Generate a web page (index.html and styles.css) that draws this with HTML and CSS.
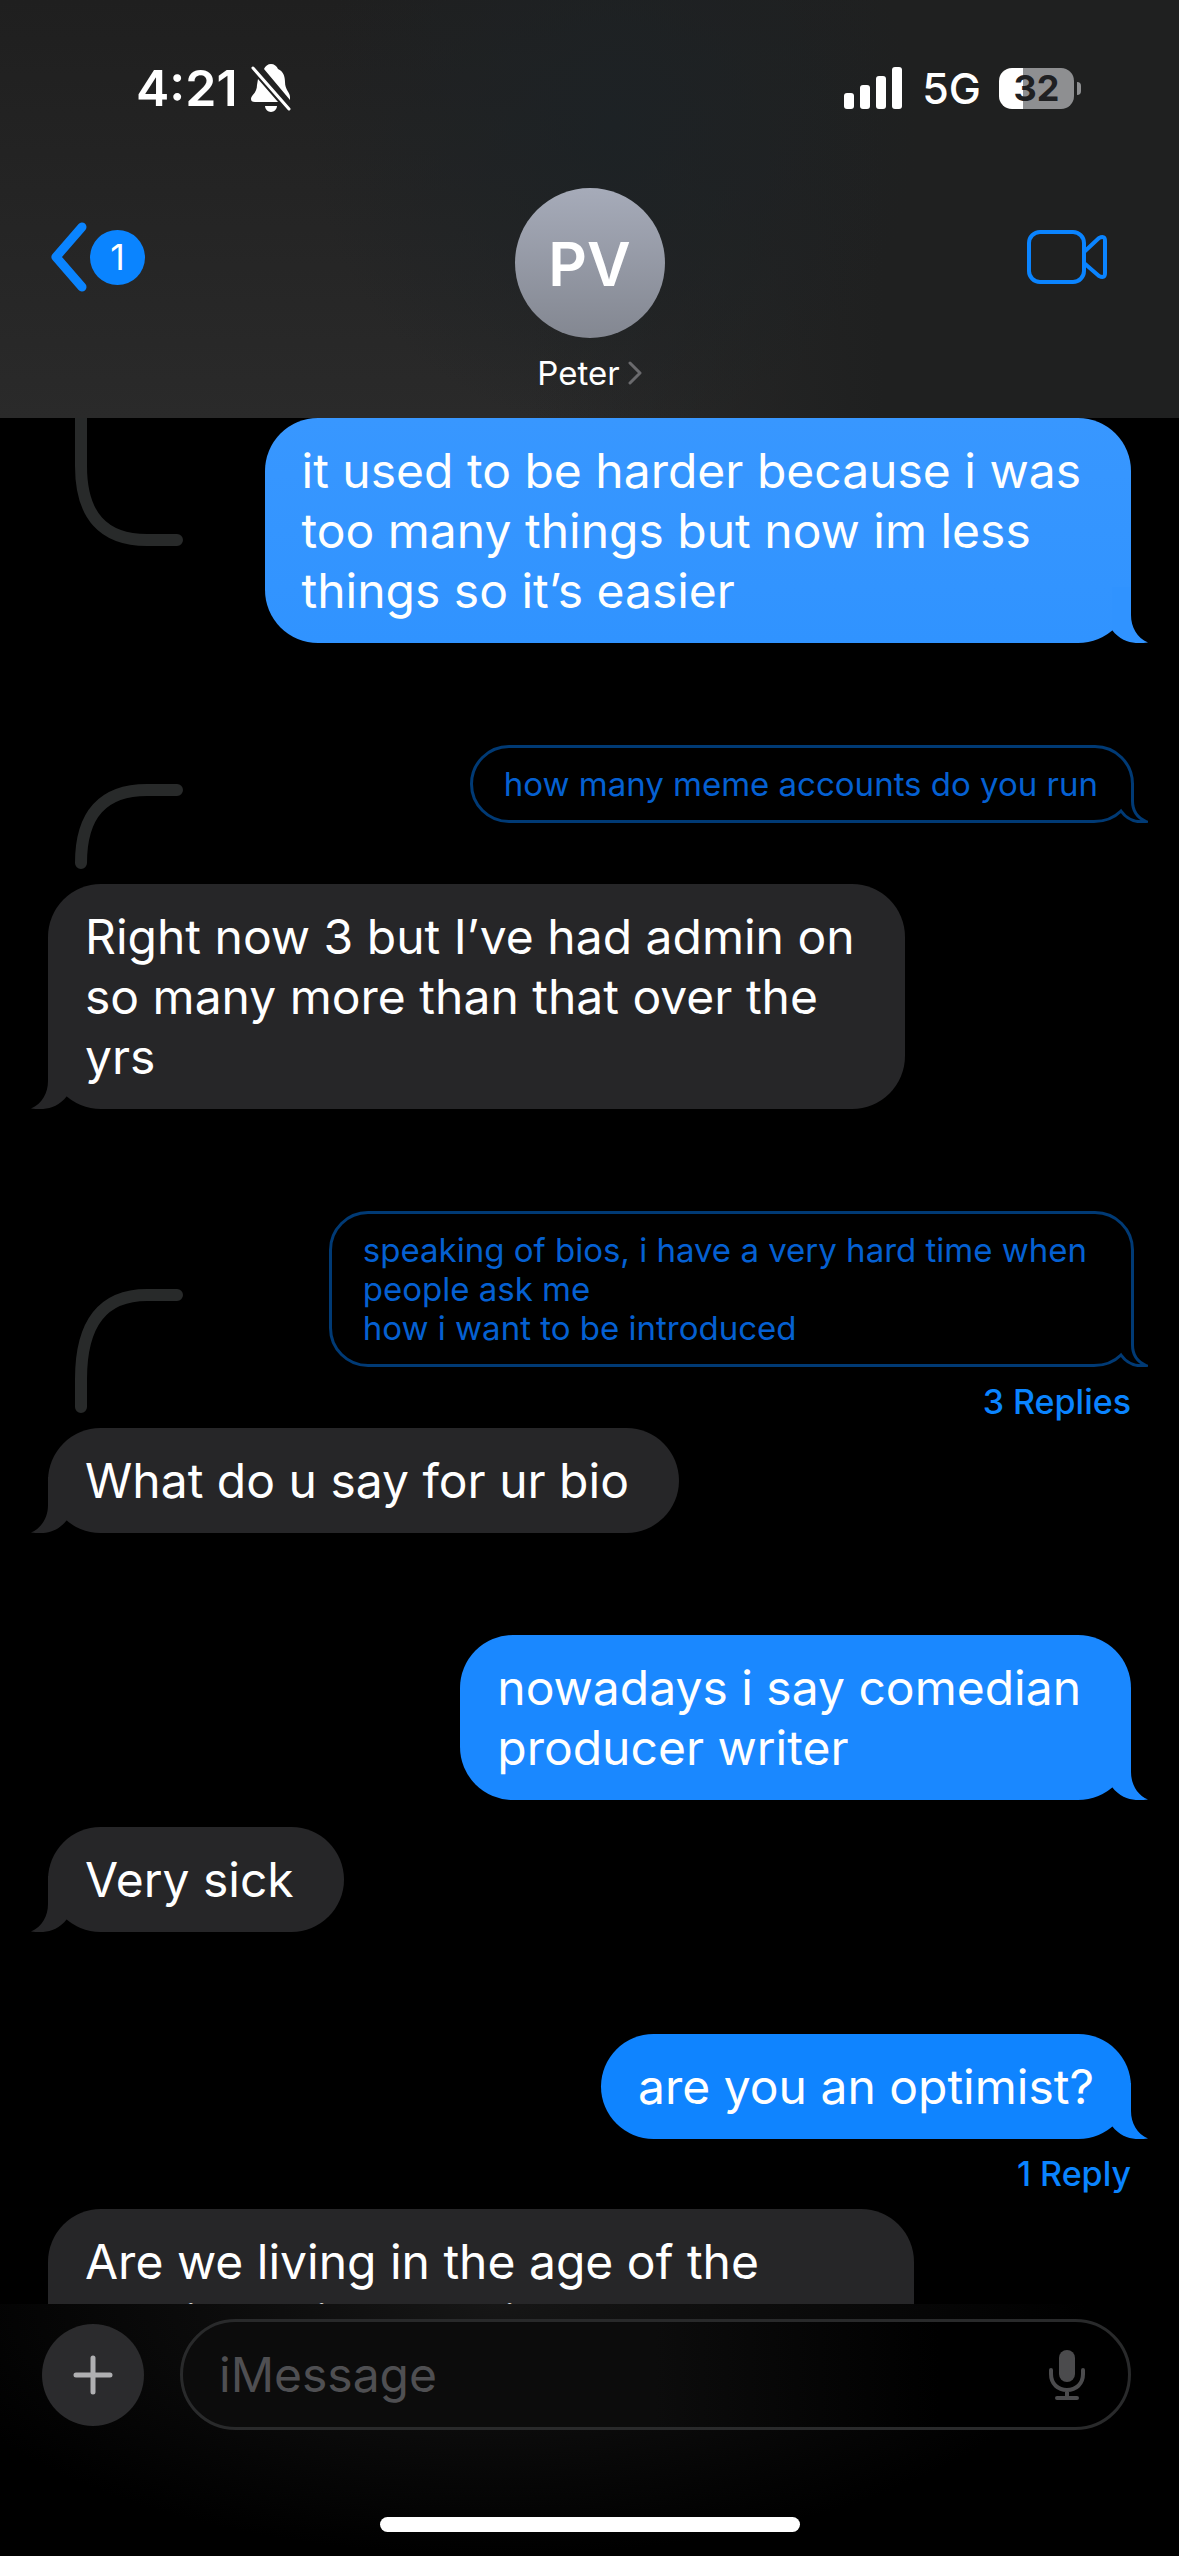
FILE: index.html
```html
<!DOCTYPE html>
<html lang="en">
<head>
    <meta charset="UTF-8">
    <meta name="viewport" content="width=device-width, initial-scale=1.0">
    <title>Peter</title>
    <link rel="stylesheet" href="styles.css">
</head>
<body>
    <!-- Tail shapes shared by the bubbles -->
    <svg class="defs" width="0" height="0" aria-hidden="true">
        <symbol id="tail" viewBox="0 0 40 56">
            <path d="M1 0H20V28C20 40 26 51 37 55.500C26 57 12 57 1 43Z"/>
        </symbol>
        <symbol id="quote-tail" viewBox="0 0 54 40">
            <path fill="#000" stroke="none" d="M41 0V41H0V36A36 36 0 0 0 36 0Z"/>
            <path d="M38.500 0V18C38.500 28 44 35 52 38.500C44 39.500 34 38 27 28C20 35 12 38.500 0 38.500"/>
        </symbol>
    </svg>

    <header class="header">
        <div class="status-bar">
            <div class="status-left">
                <span class="time">4:21</span>
                <svg class="bell" viewBox="0 0 40 48" aria-label="Silent mode">
                    <path fill="#fff" d="M13 5C14 2 17 0 20 0s6 2 7 5c5 2 7 7 7 13 0 8 5 10 5 15v3z"/>
                    <path fill="#fff" d="M7 15L27 38H4c-3 0-4-1-4-3 0-4 6-6 6-14zM14 42h12c0 3-3 6-6 6s-6-3-6-6z"/>
                    <path stroke="#fff" stroke-width="3" stroke-linecap="round" d="M2 4l36 41"/>
                </svg>
            </div>
            <div class="status-right">
                <svg class="signal" viewBox="0 0 58 42" fill="#fff" aria-label="Signal">
                    <rect x="0" y="26" width="10" height="16" rx="3"/>
                    <rect x="16" y="18" width="10" height="24" rx="3"/>
                    <rect x="32" y="9" width="10" height="33" rx="3"/>
                    <rect x="48" y="0" width="10" height="42" rx="3"/>
                </svg>
                <span class="network">5G</span>
                <span class="battery"><span class="battery-level">32</span></span>
            </div>
        </div>
        <div class="nav">
            <button class="back" type="button" aria-label="Back">
                <svg viewBox="0 0 38 70" fill="none" stroke="#0a84ff" stroke-width="9" stroke-linecap="round" stroke-linejoin="round">
                    <path d="M32 5L6 35l26 30"/>
                </svg>
                <span class="unread">1</span>
            </button>
            <button class="contact" type="button">
                <span class="avatar">PV</span>
                <span class="name">Peter
                    <svg viewBox="0 0 14 24" fill="none" stroke="#6a6a6d" stroke-width="3" stroke-linecap="round" stroke-linejoin="round">
                        <path d="M2 2l10 10L2 22"/>
                    </svg>
                </span>
            </button>
            <button class="video" type="button" aria-label="FaceTime">
                <svg viewBox="0 0 80 54" fill="none" stroke="#0a84ff" stroke-width="4" stroke-linejoin="round">
                    <rect x="2" y="2" width="55" height="50" rx="11"/>
                    <path d="M57 22L72 8q6-3 6 3v32q0 6-6 3L57 33"/>
                </svg>
            </button>
        </div>
    </header>

    <main class="messages">
        <div class="row first">
            <svg class="thread" viewBox="0 0 108 128">
                <path d="M6 -10V48Q6 122 72 122H102"/>
            </svg>
            <div class="bubble sent light">it used to be harder because i was<br>too many things but now im less<br>things so it’s easier<svg class="tail"><use href="#tail"/></svg></div>
        </div>

        <div class="row reply">
            <svg class="thread" viewBox="0 0 108 85">
                <path d="M6 79Q6 6 72 6H102"/>
            </svg>
            <div class="quote">how many meme accounts do you run<svg class="quote-tail"><use href="#quote-tail"/></svg></div>
        </div>
        <div class="bubble received">Right now 3 but I’ve had admin on<br>so many more than that over the<br>yrs<svg class="tail"><use href="#tail"/></svg></div>

        <div class="row reply">
            <svg class="thread" viewBox="0 0 108 124">
                <path d="M6 118V90Q6 6 72 6H102"/>
            </svg>
            <div class="quote-group">
                <div class="quote wide">speaking of bios, i have a very hard time when<br>people ask me<br>how i want to be introduced<svg class="quote-tail"><use href="#quote-tail"/></svg></div>
                <a class="replies" href="#">3 Replies</a>
            </div>
        </div>
        <div class="bubble received">What do u say for ur bio<svg class="tail"><use href="#tail"/></svg></div>

        <div class="bubble sent mid spaced">nowadays i say comedian<br>producer writer<svg class="tail"><use href="#tail"/></svg></div>
        <div class="bubble received close">Very sick<svg class="tail"><use href="#tail"/></svg></div>

        <div class="bubble sent snug spaced">are you an optimist?<svg class="tail"><use href="#tail"/></svg></div>
        <a class="replies" href="#">1 Reply</a>
        <div class="bubble received last">Are we living in the age of the<br>archives king was in</div>
    </main>

    <footer class="composer">
        <form class="composer-form">
            <button class="plus" type="button" aria-label="Add">
                <svg viewBox="0 0 40 40" stroke="#b0b0b2" stroke-width="5" stroke-linecap="round">
                    <path d="M20 3v34M3 20h34"/>
                </svg>
            </button>
            <div class="field">
                <input type="text" id="message" placeholder="iMessage" aria-label="iMessage">
                <button class="mic" type="button" aria-label="Dictate">
                    <svg viewBox="0 0 36 50" fill="none" stroke="#4b4b4d" stroke-width="4" stroke-linecap="round">
                        <rect x="10" y="0" width="16" height="32" rx="8" fill="#4b4b4d" stroke="none"/>
                        <path d="M2 20v4c0 10 7 16 16 16s16-6 16-16v-4M18 40v7M8 48h20"/>
                    </svg>
                </button>
            </div>
        </form>
        <div class="home-bar"></div>
    </footer>
</body>
</html>
```
FILE: styles.css
```css
* {
    box-sizing: border-box;
}
body {
    margin: 0;
    height: 100vh;
    display: flex;
    flex-direction: column;
    overflow: hidden;
    background-color: #000000;
    color: #ffffff;
    font-family: Inter, "Liberation Sans", sans-serif;
}
button {
    background: none;
    border: none;
    padding: 0;
    color: inherit;
    font-family: inherit;
    cursor: pointer;
}
svg {
    display: block;
    flex-shrink: 0;
}
.defs {
    position: absolute;
}

/* Header */
.header {
    flex-shrink: 0;
    padding: 56px 48px 24px;
    background:
        radial-gradient(circle at 52% 30%, #1d2225, transparent 45%),
        linear-gradient(90deg, transparent 45%, #1f2020 75%),
        linear-gradient(#1f1f1f, #2a2a2a);
}
.status-bar {
    display: flex;
    justify-content: space-between;
    align-items: center;
    height: 64px;
    padding: 0 55px 0 88px;
}
.status-left, .status-right {
    display: flex;
    align-items: center;
}
.status-left {
    gap: 13px;
}
.time {
    font-size: 50px;
    font-weight: 600;
}
.bell {
    width: 40px;
    height: 48px;
    fill: none;
}
.signal {
    width: 58px;
    height: 42px;
}
.network {
    margin: 0 18px 0 20px;
    font-size: 43px;
    font-weight: 500;
}
.battery {
    position: relative;
    margin-right: 2px;
}
.battery-level {
    display: block;
    width: 75px;
    height: 41px;
    border-radius: 13px;
    background: linear-gradient(90deg, #ffffff 32%, #8e8f91 32%);
    color: #1f2022;
    font-size: 36px;
    font-weight: 700;
    line-height: 41px;
    text-align: center;
}
.battery::after {
    content: "";
    position: absolute;
    right: -7px;
    top: 14px;
    width: 4px;
    height: 13px;
    border-radius: 0 4px 4px 0;
    background: #8e8f91;
}
.nav {
    display: grid;
    grid-template-columns: 1fr auto 1fr;
    align-items: start;
    margin-top: 68px;
}
.back {
    display: flex;
    align-items: center;
    gap: 2px;
    margin: 34px 0 0 2px;
}
.back svg {
    width: 38px;
    height: 70px;
}
.unread {
    width: 55px;
    height: 55px;
    border-radius: 50%;
    background: #0a84ff;
    font-size: 36px;
    line-height: 55px;
}
.contact {
    display: flex;
    flex-direction: column;
    align-items: center;
    gap: 14px;
}
.avatar {
    width: 150px;
    height: 150px;
    border-radius: 50%;
    background: linear-gradient(#a6abb9, #838791);
    font-size: 60px;
    font-weight: 600;
    line-height: 152px;
}
.name {
    display: flex;
    align-items: center;
    gap: 8px;
    font-size: 33px;
    line-height: 42px;
}
.name svg {
    width: 14px;
    height: 24px;
}
.video {
    justify-self: end;
    margin: 42px 24px 0 0;
}
.video svg {
    width: 80px;
    height: 54px;
}

/* Messages */
.messages {
    flex: 1;
    min-height: 0;
    overflow: hidden;
    display: flex;
    flex-direction: column;
    padding: 0 48px;
}
.row {
    display: flex;
    justify-content: space-between;
    padding-left: 27px;
}
.first {
    align-items: flex-start;
}
.reply {
    align-items: flex-end;
    margin: 102px 0 15px;
}
.reply > .quote, .quote-group {
    align-self: flex-start;
}
.reply > .quote {
    margin-bottom: 46px;
}
.thread {
    width: 108px;
    fill: none;
    stroke: #282a2a;
    stroke-width: 12px;
    stroke-linecap: round;
}
.bubble {
    position: relative;
    padding: 23px 50px 22px 37px;
    border-radius: 53px;
    font-size: 48px;
    line-height: 60px;
    white-space: nowrap;
}
.sent {
    align-self: flex-end;
    background: #0f84ff;
    fill: #0f84ff;
}
.received {
    align-self: flex-start;
    background: #262628;
    fill: #262628;
}
.light {
    background: linear-gradient(#3897ff, #3093ff);
    fill: #3093ff;
}
.mid {
    background: #1a88ff;
    fill: #1a88ff;
}
.snug {
    padding-right: 37px;
}
.last {
    min-width: 80%;
}
.spaced {
    margin-top: 102px;
}
.close {
    margin-top: 27px;
}
.tail {
    position: absolute;
    right: -20px;
    bottom: 0;
    width: 40px;
    height: 56px;
}
.received .tail {
    right: auto;
    left: -20px;
    transform: scaleX(-1);
}
.quote {
    position: relative;
    margin-right: -3px;
    padding: 17px 33px 16px 31px;
    border: 3px solid #003a75;
    border-radius: 39px;
    color: #0560d2;
    font-size: 33px;
    line-height: 39px;
    white-space: nowrap;
}
.wide {
    padding-right: 44px;
}
.quote-tail {
    position: absolute;
    right: -17px;
    bottom: -3px;
    width: 54px;
    height: 40px;
    fill: none;
    stroke: #003a75;
    stroke-width: 3px;
}
.quote-group {
    display: flex;
    flex-direction: column;
}
.replies {
    align-self: flex-end;
    margin: 15px 0;
    color: #0a84ff;
    font-size: 34px;
    font-weight: 500;
    line-height: 40px;
    text-decoration: none;
}
.quote-group .replies {
    margin-bottom: -9px;
}

/* Composer */
.composer {
    flex-shrink: 0;
    padding: 15px 0 24px;
    background: radial-gradient(ellipse 50% 100% at 42% 0, #161616, #000000);
}
.composer-form {
    display: flex;
    align-items: center;
    gap: 36px;
    padding: 0 48px 0 42px;
}
.plus {
    display: flex;
    justify-content: center;
    align-items: center;
    width: 102px;
    height: 102px;
    border-radius: 50%;
    background: #2b2b2d;
}
.plus svg {
    width: 40px;
    height: 40px;
}
.field {
    flex: 1;
    display: flex;
    align-items: center;
    height: 111px;
    padding: 0 43px 0 36px;
    border: 3px solid #292a2b;
    border-radius: 56px;
    background: linear-gradient(90deg, #0c0c0c 50%, #000000 80%);
}
.field input {
    flex: 1;
    min-width: 0;
    border: none;
    outline: none;
    padding: 0;
    background: none;
    color: #ffffff;
    font-family: inherit;
    font-size: 48px;
}
.field input::placeholder {
    color: #4f4f52;
    opacity: 1;
}
.mic svg {
    width: 36px;
    height: 50px;
}
.home-bar {
    width: 420px;
    height: 15px;
    margin: 87px auto 0;
    border-radius: 8px;
    background: #ffffff;
}
```
